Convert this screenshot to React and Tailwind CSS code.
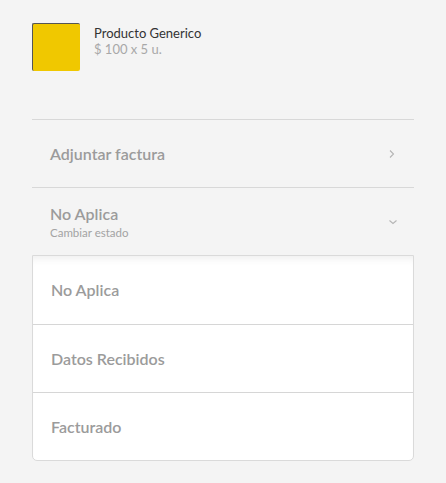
export default function App() {
  const items = ["No Aplica", "Datos Recibidos", "Facturado"];
  return (
    <div className="min-h-[483px] w-[446px] bg-[#f4f4f4] px-8 pt-[23px]" style={{ fontFamily: "Lato, 'Open Sans', sans-serif" }}>
      <div className="flex items-start gap-[14px]">
        <div className="h-[48px] w-[48px] rounded-[2px] bg-[#f0c800] border-l-[1.5px] border-t-[1.5px] border-[#555]" />
        <div className="pt-[2px]">
          <div className="text-[13px] leading-[16px] text-[#333]">Producto Generico</div>
          <div className="text-[13px] leading-[17px] text-[#a8a8a8]">$ 100 x 5 u.</div>
        </div>
      </div>
      <div className="mt-[48px] border-t border-[#d8d8d8]">
        <div className="flex h-[67px] items-center justify-between pl-[18px] pr-[18px]">
          <span className="text-[16px] font-semibold text-[#9b9b9b]">Adjuntar factura</span>
          <svg width="8" height="10" viewBox="0 0 8 10" className="text-[#b5b5b5]"><path d="M2 1.5 L5.5 5 L2 8.5" fill="none" stroke="currentColor" strokeWidth="1.1" /></svg>
        </div>
        <div className="border-t border-[#d8d8d8]">
          <div className="flex h-[67px] items-center justify-between pl-[18px] pr-[16px]">
            <div>
              <div className="text-[16px] font-semibold leading-[18px] text-[#9b9b9b]">No Aplica</div>
              <div className="mt-[3px] text-[11.5px] leading-[13px] text-[#a3a3a3]">Cambiar estado</div>
            </div>
            <svg width="10" height="8" viewBox="0 0 10 8" className="text-[#b5b5b5]"><path d="M1.5 2.5 L5 5.5 L8.5 2.5" fill="none" stroke="currentColor" strokeWidth="1.1" /></svg>
          </div>
        </div>
        <div className="rounded-b-[5px] border border-[#dadada] bg-white shadow-[inset_0_8px_8px_-6px_rgba(0,0,0,0.08)]">
          {items.map((t, i) => (
            <div key={t} className={`flex h-[68px] items-center pl-[18px] ${i > 0 ? "border-t border-[#d6d6d6]" : ""}`}>
              <span className="text-[16px] font-semibold text-[#9b9b9b]">{t}</span>
            </div>
          ))}
        </div>
      </div>
    </div>
  );
}
